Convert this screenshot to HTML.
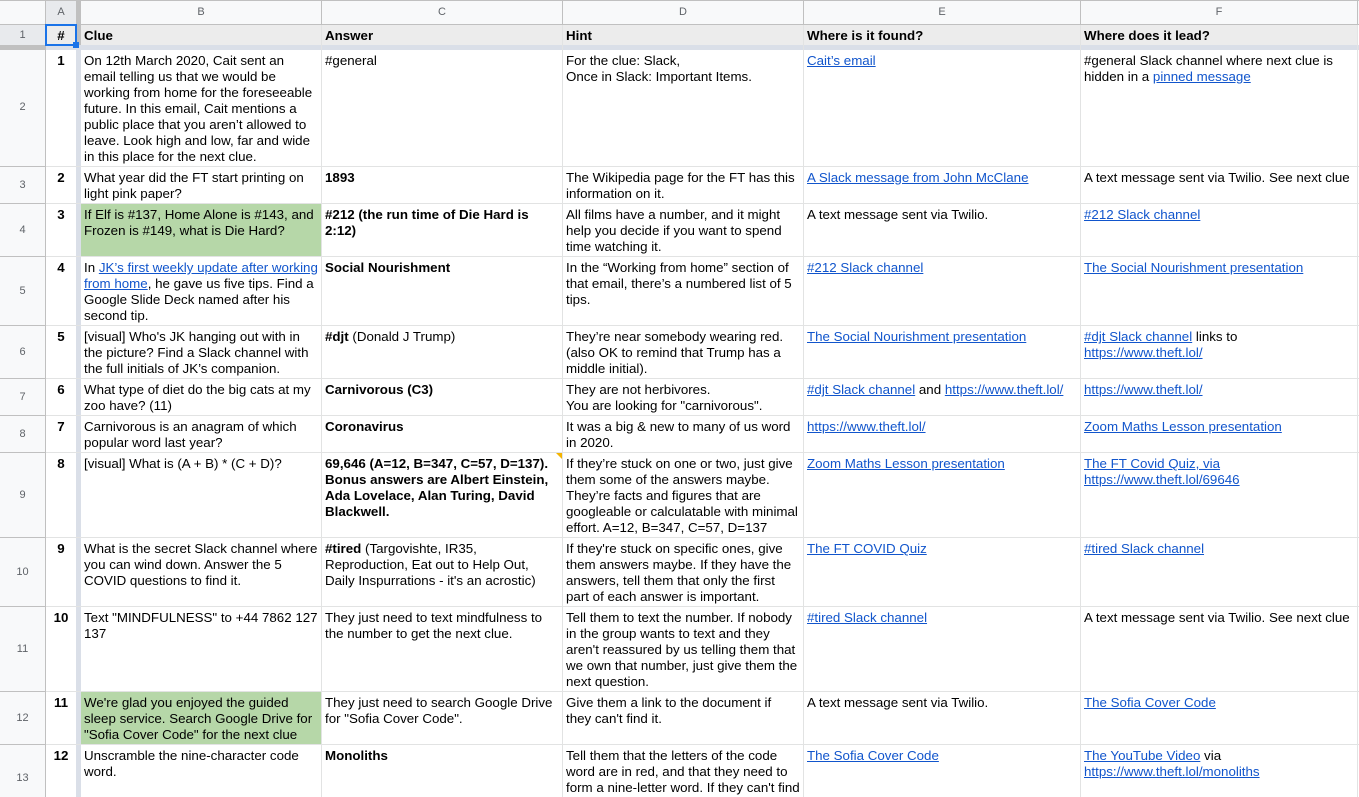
<!DOCTYPE html>
<html><head><meta charset="utf-8">
<style>
html,body{margin:0;padding:0;background:#fff;}
#s{position:relative;width:1359px;height:797px;overflow:hidden;font:13.33px/16px "Liberation Sans",Arial,sans-serif;color:#000;background:#fff;}
.t{position:absolute;white-space:nowrap;margin-top:1px;}
.l{position:absolute;background:#e2e3e3;}
.g{position:absolute;background:#c0c0c0;}
a{color:#1155cc;text-decoration:underline;}
b{font-weight:bold;}
.t.h{color:#5f6368;font-size:11px;text-align:center;line-height:14px;margin-top:0;}
.n{font-weight:bold;text-align:center;width:30px;left:46px;}
</style></head><body><div id="s">
<!-- header backgrounds -->
<div style="position:absolute;left:0;top:0;width:1359px;height:24px;background:#f8f9fa"></div>
<div style="position:absolute;left:46px;top:0;width:30px;height:24px;background:#e8eaed"></div>
<div style="position:absolute;left:0;top:25px;width:45px;height:772px;background:#f8f9fa"></div>
<div style="position:absolute;left:0;top:25px;width:45px;height:20px;background:#e8eaed"></div>
<div style="position:absolute;left:46px;top:25px;width:1311px;height:20px;background:#ececec"></div>
<!-- green fills -->
<div style="position:absolute;left:81px;top:204px;width:240px;height:52px;background:#b6d7a8"></div>
<div style="position:absolute;left:81px;top:692px;width:240px;height:52px;background:#b6d7a8"></div>
<!-- freeze bars -->
<div style="position:absolute;left:76px;top:0;width:5px;height:45px;background:#c0c0c0"></div>
<div style="position:absolute;left:76px;top:45px;width:5px;height:752px;background:#dadfe8"></div>
<div style="position:absolute;left:0;top:45px;width:46px;height:5px;background:#c0c0c0"></div>
<div style="position:absolute;left:46px;top:45px;width:1313px;height:5px;background:#dadfe8"></div>
<!-- vertical lines -->
<div class="g" style="left:45px;top:0;width:1px;height:797px"></div>
<div class="l" style="left:321px;top:25px;width:1px;height:772px"></div>
<div class="l" style="left:562px;top:25px;width:1px;height:772px"></div>
<div class="l" style="left:803px;top:25px;width:1px;height:772px"></div>
<div class="l" style="left:1080px;top:25px;width:1px;height:772px"></div>
<div class="l" style="left:1357px;top:25px;width:1px;height:772px"></div>
<div class="g" style="left:321px;top:0;width:1px;height:24px"></div>
<div class="g" style="left:562px;top:0;width:1px;height:24px"></div>
<div class="g" style="left:803px;top:0;width:1px;height:24px"></div>
<div class="g" style="left:1080px;top:0;width:1px;height:24px"></div>
<div class="g" style="left:1357px;top:0;width:1px;height:24px"></div>
<!-- horizontal lines -->
<div class="g" style="left:0;top:0;width:1359px;height:1px"></div>
<div class="g" style="left:0;top:24px;width:1359px;height:1px"></div>
<div class="l" style="left:46px;top:166px;width:1313px;height:1px"></div>
<div class="l" style="left:46px;top:203px;width:1313px;height:1px"></div>
<div class="l" style="left:46px;top:256px;width:1313px;height:1px"></div>
<div class="l" style="left:46px;top:325px;width:1313px;height:1px"></div>
<div class="l" style="left:46px;top:378px;width:1313px;height:1px"></div>
<div class="l" style="left:46px;top:415px;width:1313px;height:1px"></div>
<div class="l" style="left:46px;top:452px;width:1313px;height:1px"></div>
<div class="l" style="left:46px;top:537px;width:1313px;height:1px"></div>
<div class="l" style="left:46px;top:606px;width:1313px;height:1px"></div>
<div class="l" style="left:46px;top:691px;width:1313px;height:1px"></div>
<div class="l" style="left:46px;top:744px;width:1313px;height:1px"></div>
<div class="g" style="left:0;top:166px;width:45px;height:1px"></div>
<div class="g" style="left:0;top:203px;width:45px;height:1px"></div>
<div class="g" style="left:0;top:256px;width:45px;height:1px"></div>
<div class="g" style="left:0;top:325px;width:45px;height:1px"></div>
<div class="g" style="left:0;top:378px;width:45px;height:1px"></div>
<div class="g" style="left:0;top:415px;width:45px;height:1px"></div>
<div class="g" style="left:0;top:452px;width:45px;height:1px"></div>
<div class="g" style="left:0;top:537px;width:45px;height:1px"></div>
<div class="g" style="left:0;top:606px;width:45px;height:1px"></div>
<div class="g" style="left:0;top:691px;width:45px;height:1px"></div>
<div class="g" style="left:0;top:744px;width:45px;height:1px"></div>
<!-- column headers -->
<div class="t h" style="left:46px;width:30px;top:5px">A</div>
<div class="t h" style="left:81px;width:240px;top:5px">B</div>
<div class="t h" style="left:322px;width:240px;top:5px">C</div>
<div class="t h" style="left:563px;width:240px;top:5px">D</div>
<div class="t h" style="left:804px;width:276px;top:5px">E</div>
<div class="t h" style="left:1081px;width:276px;top:5px">F</div>
<!-- row headers -->
<div class="t h" style="left:0;width:45px;top:28px">1</div>
<div class="t h" style="left:0;width:45px;top:100px">2</div>
<div class="t h" style="left:0;width:45px;top:178px">3</div>
<div class="t h" style="left:0;width:45px;top:223px">4</div>
<div class="t h" style="left:0;width:45px;top:284px">5</div>
<div class="t h" style="left:0;width:45px;top:345px">6</div>
<div class="t h" style="left:0;width:45px;top:390px">7</div>
<div class="t h" style="left:0;width:45px;top:427px">8</div>
<div class="t h" style="left:0;width:45px;top:488px">9</div>
<div class="t h" style="left:0;width:45px;top:565px">10</div>
<div class="t h" style="left:0;width:45px;top:642px">11</div>
<div class="t h" style="left:0;width:45px;top:711px">12</div>
<div class="t h" style="left:0;width:45px;top:771px">13</div>
<!-- header row -->
<div class="t n" style="top:27px">#</div>
<div class="t" style="left:84px;top:27px"><b>Clue</b></div>
<div class="t" style="left:325px;top:27px"><b>Answer</b></div>
<div class="t" style="left:566px;top:27px"><b>Hint</b></div>
<div class="t" style="left:807px;top:27px"><b>Where is it found?</b></div>
<div class="t" style="left:1084px;top:27px"><b>Where does it lead?</b></div>
<!-- selection -->
<div style="position:absolute;left:45px;top:24px;width:28px;height:18px;border:2px solid #1a73e8"></div>
<div style="position:absolute;left:73px;top:42px;width:6px;height:6px;background:#1a73e8"></div>
<!-- row 2 -->
<div class="t n" style="top:52px">1</div>
<div class="t" style="left:84px;top:52px">On 12th March 2020, Cait sent an<br>email telling us that we would be<br>working from home for the foreseeable<br>future. In this email, Cait mentions a<br>public place that you aren’t allowed to<br>leave. Look high and low, far and wide<br>in this place for the next clue.</div>
<div class="t" style="left:325px;top:52px">#general</div>
<div class="t" style="left:566px;top:52px">For the clue: Slack,<br>Once in Slack: Important Items.</div>
<div class="t" style="left:807px;top:52px"><a href="#">Cait’s email</a></div>
<div class="t" style="left:1084px;top:52px">#general Slack channel where next clue is<br>hidden in a <a href="#">pinned message</a></div>
<!-- row 3 -->
<div class="t n" style="top:169px">2</div>
<div class="t" style="left:84px;top:169px">What year did the FT start printing on<br>light pink paper?</div>
<div class="t" style="left:325px;top:169px"><b>1893</b></div>
<div class="t" style="left:566px;top:169px">The Wikipedia page for the FT has this<br>information on it.</div>
<div class="t" style="left:807px;top:169px"><a href="#">A Slack message from John McClane</a></div>
<div class="t" style="left:1084px;top:169px">A text message sent via Twilio. See next clue</div>
<!-- row 4 -->
<div class="t n" style="top:206px">3</div>
<div class="t" style="left:84px;top:206px">If Elf is #137, Home Alone is #143, and<br>Frozen is #149, what is Die Hard?</div>
<div class="t" style="left:325px;top:206px"><b>#212 (the run time of Die Hard is<br>2:12)</b></div>
<div class="t" style="left:566px;top:206px">All films have a number, and it might<br>help you decide if you want to spend<br>time watching it.</div>
<div class="t" style="left:807px;top:206px">A text message sent via Twilio.</div>
<div class="t" style="left:1084px;top:206px"><a href="#">#212 Slack channel</a></div>
<!-- row 5 -->
<div class="t n" style="top:259px">4</div>
<div class="t" style="left:84px;top:259px">In <a href="#">JK’s first weekly update after working</a><br><a href="#">from home</a>, he gave us five tips. Find a<br>Google Slide Deck named after his<br>second tip.</div>
<div class="t" style="left:325px;top:259px"><b>Social Nourishment</b></div>
<div class="t" style="left:566px;top:259px">In the “Working from home” section of<br>that email, there’s a numbered list of 5<br>tips.</div>
<div class="t" style="left:807px;top:259px"><a href="#">#212 Slack channel</a></div>
<div class="t" style="left:1084px;top:259px"><a href="#">The Social Nourishment presentation</a></div>
<!-- row 6 -->
<div class="t n" style="top:328px">5</div>
<div class="t" style="left:84px;top:328px">[visual] Who's JK hanging out with in<br>the picture? Find a Slack channel with<br>the full initials of JK’s companion.</div>
<div class="t" style="left:325px;top:328px"><b>#djt</b> (Donald J Trump)</div>
<div class="t" style="left:566px;top:328px">They’re near somebody wearing red.<br>(also OK to remind that Trump has a<br>middle initial).</div>
<div class="t" style="left:807px;top:328px"><a href="#">The Social Nourishment presentation</a></div>
<div class="t" style="left:1084px;top:328px"><a href="#">#djt Slack channel</a> links to<br><a href="#">https://www.theft.lol/</a></div>
<!-- row 7 -->
<div class="t n" style="top:381px">6</div>
<div class="t" style="left:84px;top:381px">What type of diet do the big cats at my<br>zoo have? (11)</div>
<div class="t" style="left:325px;top:381px"><b>Carnivorous (C3)</b></div>
<div class="t" style="left:566px;top:381px">They are not herbivores.<br>You are looking for "carnivorous".</div>
<div class="t" style="left:807px;top:381px"><a href="#">#djt Slack channel</a> and <a href="#">https://www.theft.lol/</a></div>
<div class="t" style="left:1084px;top:381px"><a href="#">https://www.theft.lol/</a></div>
<!-- row 8 -->
<div class="t n" style="top:418px">7</div>
<div class="t" style="left:84px;top:418px">Carnivorous is an anagram of which<br>popular word last year?</div>
<div class="t" style="left:325px;top:418px"><b>Coronavirus</b></div>
<div class="t" style="left:566px;top:418px">It was a big &amp; new to many of us word<br>in 2020.</div>
<div class="t" style="left:807px;top:418px"><a href="#">https://www.theft.lol/</a></div>
<div class="t" style="left:1084px;top:418px"><a href="#">Zoom Maths Lesson presentation</a></div>
<!-- row 9 -->
<div class="t n" style="top:455px">8</div>
<div class="t" style="left:84px;top:455px">[visual] What is (A + B) * (C + D)?</div>
<div class="t" style="left:325px;top:455px"><b>69,646 (A=12, B=347, C=57, D=137).<br>Bonus answers are Albert Einstein,<br>Ada Lovelace, Alan Turing, David<br>Blackwell.</b></div>
<div class="t" style="left:566px;top:455px">If they’re stuck on one or two, just give<br>them some of the answers maybe.<br>They’re facts and figures that are<br>googleable or calculatable with minimal<br>effort. A=12, B=347, C=57, D=137</div>
<div class="t" style="left:807px;top:455px"><a href="#">Zoom Maths Lesson presentation</a></div>
<div class="t" style="left:1084px;top:455px"><a href="#">The FT Covid Quiz, via</a><br><a href="#">https://www.theft.lol/69646</a></div>
<div style="position:absolute;left:556px;top:453px;width:0;height:0;border-top:6px solid #f4b400;border-left:6px solid transparent"></div>
<!-- row 10 -->
<div class="t n" style="top:540px">9</div>
<div class="t" style="left:84px;top:540px">What is the secret Slack channel where<br>you can wind down. Answer the 5<br>COVID questions to find it.</div>
<div class="t" style="left:325px;top:540px"><b>#tired</b> (Targovishte, IR35,<br>Reproduction, Eat out to Help Out,<br>Daily Inspurrations - it's an acrostic)</div>
<div class="t" style="left:566px;top:540px">If they're stuck on specific ones, give<br>them answers maybe. If they have the<br>answers, tell them that only the first<br>part of each answer is important.</div>
<div class="t" style="left:807px;top:540px"><a href="#">The FT COVID Quiz</a></div>
<div class="t" style="left:1084px;top:540px"><a href="#">#tired Slack channel</a></div>
<!-- row 11 -->
<div class="t n" style="top:609px">10</div>
<div class="t" style="left:84px;top:609px">Text "MINDFULNESS" to +44 7862 127<br>137</div>
<div class="t" style="left:325px;top:609px">They just need to text mindfulness to<br>the number to get the next clue.</div>
<div class="t" style="left:566px;top:609px">Tell them to text the number. If nobody<br>in the group wants to text and they<br>aren't reassured by us telling them that<br>we own that number, just give them the<br>next question.</div>
<div class="t" style="left:807px;top:609px"><a href="#">#tired Slack channel</a></div>
<div class="t" style="left:1084px;top:609px">A text message sent via Twilio. See next clue</div>
<!-- row 12 -->
<div class="t n" style="top:694px">11</div>
<div class="t" style="left:84px;top:694px">We're glad you enjoyed the guided<br>sleep service. Search Google Drive for<br>"Sofia Cover Code" for the next clue</div>
<div class="t" style="left:325px;top:694px">They just need to search Google Drive<br>for "Sofia Cover Code".</div>
<div class="t" style="left:566px;top:694px">Give them a link to the document if<br>they can't find it.</div>
<div class="t" style="left:807px;top:694px">A text message sent via Twilio.</div>
<div class="t" style="left:1084px;top:694px"><a href="#">The Sofia Cover Code</a></div>
<!-- row 13 -->
<div class="t n" style="top:747px">12</div>
<div class="t" style="left:84px;top:747px">Unscramble the nine-character code<br>word.</div>
<div class="t" style="left:325px;top:747px"><b>Monoliths</b></div>
<div class="t" style="left:566px;top:747px">Tell them that the letters of the code<br>word are in red, and that they need to<br>form a nine-letter word. If they can't find</div>
<div class="t" style="left:807px;top:747px"><a href="#">The Sofia Cover Code</a></div>
<div class="t" style="left:1084px;top:747px"><a href="#">The YouTube Video</a> via<br><a href="#">https://www.theft.lol/monoliths</a></div>
</div></body></html>
